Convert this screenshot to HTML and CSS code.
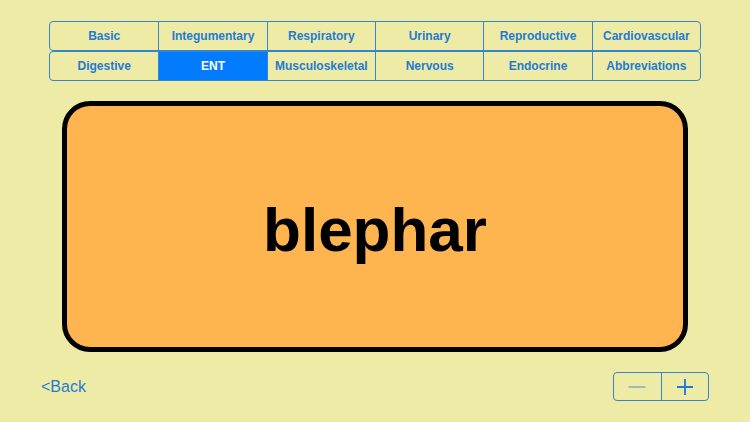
FILE: index.html
```html
<!DOCTYPE html>
<html>
<head>
<meta charset="utf-8">
<link rel="stylesheet" href="styles.css">
</head>
<body>
<div class="page">
  <div class="segments">
    <div class="seg-row">
      <div class="seg">Basic</div>
      <div class="seg">Integumentary</div>
      <div class="seg">Respiratory</div>
      <div class="seg">Urinary</div>
      <div class="seg">Reproductive</div>
      <div class="seg">Cardiovascular</div>
    </div>
    <div class="seg-row">
      <div class="seg">Digestive</div>
      <div class="seg seg-on">ENT</div>
      <div class="seg">Musculoskeletal</div>
      <div class="seg">Nervous</div>
      <div class="seg">Endocrine</div>
      <div class="seg">Abbreviations</div>
    </div>
  </div>
  <div class="card">
    <div class="word">blephar</div>
  </div>
  <div class="bottom">
    <div class="back">&lt;Back</div>
    <div class="stepper">
      <div class="step step-off">
        <svg width="18" height="18" viewBox="0 0 18 18"><path d="M0.5 9H17.5" stroke="#86aec6" stroke-width="1.6"/></svg>
      </div>
      <div class="step">
        <svg width="18" height="18" viewBox="0 0 18 18"><path d="M1 9H17M9 1V17" stroke="#1a7ad8" stroke-width="1.8"/></svg>
      </div>
    </div>
  </div>
</div>
</body>
</html>
```

FILE: styles.css
```css
html, body {
  margin: 0;
  padding: 0;
}
body {
  background: #eeeba6;
  font-family: "Liberation Sans", Arial, sans-serif;
  width: 750px;
  height: 422px;
  overflow: hidden;
}
.page {
  display: flex;
  flex-direction: column;
  padding-top: 21px;
}
.segments {
  margin-left: 49px;
  width: 652px;
  display: flex;
  flex-direction: column;
}
.seg-row {
  display: grid;
  grid-template-columns: repeat(6, 1fr);
  height: 30px;
  box-sizing: border-box;
  border: 1px solid #3585cf;
  border-radius: 4px;
  overflow: hidden;
}
.seg {
  display: flex;
  align-items: center;
  justify-content: center;
  font-size: 12px;
  font-weight: bold;
  color: #1f7bd2;
  border-left: 1px solid #3585cf;
}
.seg:first-child {
  border-left: none;
}
.seg-on {
  background: #027bfc;
  color: #ffffff;
}
.card {
  margin: 20px 0 0 62px;
  width: 626px;
  height: 251px;
  box-sizing: border-box;
  border: 5px solid #000;
  border-radius: 28px;
  background: #feb54f;
  display: flex;
  align-items: center;
  justify-content: center;
}
.word {
  font-size: 62px;
  font-weight: bold;
  color: #000;
  margin-top: 6px;
}
.bottom {
  margin-top: 20px;
  display: flex;
  align-items: center;
  justify-content: space-between;
  padding: 0 41px 0 41px;
}
.back {
  font-size: 16px;
  color: #1f7bd2;
  margin-top: 1px;
}
.stepper {
  display: flex;
  width: 96px;
  height: 29px;
  box-sizing: border-box;
  border: 1px solid #3585cf;
  border-radius: 4px;
}
.step {
  flex: 1;
  display: flex;
  align-items: center;
  justify-content: center;
}
.step-off {
  border-right: 1px solid #3585cf;
}
.step svg {
  display: block;
}
```
